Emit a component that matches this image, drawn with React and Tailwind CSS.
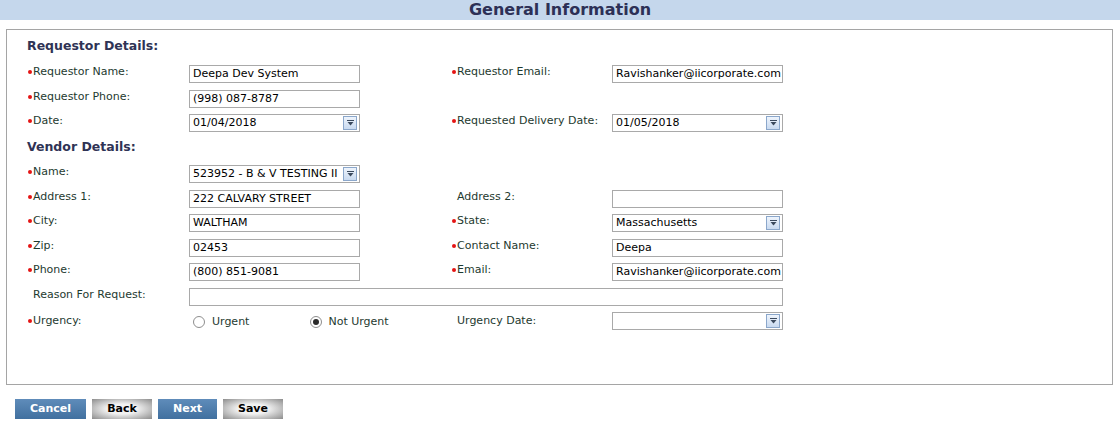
import React from 'react';

const font = { fontFamily: '"DejaVu Sans", Verdana, sans-serif' };

const DropButton = () => (
    <span className="absolute right-[2px] top-[1px] w-[14px] h-[14px] border border-[#8ba7cb] bg-gradient-to-b from-[#eef4fc] to-[#c9daf0] flex items-center justify-center">
        <svg width="7" height="6" viewBox="0 0 7 6">
            <rect x="0" y="0" width="7" height="1" fill="#3b4a5e" />
            <path d="M0.5 2 L6.5 2 L3.5 5.5 Z" fill="#3b4a5e" />
        </svg>
    </span>
);

const Label = ({ text, required = true }) => (
    <div className="flex items-center text-[11px] leading-[14px] text-[#1e3a2f] whitespace-nowrap">
        <span className={`w-[4px] h-[4px] rounded-full mr-[1px] ml-[1px] ${required ? 'bg-[#e41414]' : 'bg-transparent'}`} />
        {text}
    </div>
);

const TextBox = ({ value = '', wide = false }) => (
    <div className={`${wide ? 'w-[594px]' : 'w-[171px]'} h-[18px] border border-[#a9a9a9] bg-white text-[11px] leading-[16px] text-black pl-[3px] overflow-hidden whitespace-nowrap`}>
        {value}
    </div>
);

const SelectBox = ({ value = '' }) => (
    <div className="relative w-[171px] h-[18px] border border-[#a9a9a9] bg-white text-[11px] leading-[16px] text-black pl-[3px] pr-[20px] whitespace-nowrap">
        <div className="overflow-hidden">{value}</div>
        <DropButton />
    </div>
);

const Row = ({ children }) => (
    <div className="grid grid-cols-[162px_171px_91px_161px_171px] h-[24.5px] items-start">
        {children}
    </div>
);

const Radio = ({ checked }) => (
    <span className="w-[12px] h-[12px] rounded-full border border-[#8e8e8e] bg-white flex items-center justify-center">
        {checked && <span className="w-[6px] h-[6px] rounded-full bg-[#2a2a2a]" />}
    </span>
);

const App = () => {
    return (
        <div className="w-[1120px] h-[428px] bg-white" style={font}>
            {/* Header */}
            <div className="h-[20px] bg-[#c5d7ec] text-center text-[16px] leading-[20px] font-bold text-[#2d3056]">
                General Information
            </div>

            {/* Form panel */}
            <div className="ml-[6px] mr-[7px] mt-[9px] h-[356px] border border-[#a5a5a5] pl-[20px] pt-[8px]">
                <div className="h-[27px] text-[12.5px] leading-[16px] font-bold text-[#2f3355]">Requestor Details:</div>
                <Row>
                    <Label text="Requestor Name:" />
                    <TextBox value="Deepa Dev System" />
                    <div />
                    <Label text="Requestor Email:" />
                    <TextBox value="Ravishanker@iicorporate.com" />
                </Row>
                <Row>
                    <Label text="Requestor Phone:" />
                    <TextBox value="(998) 087-8787" />
                </Row>
                <Row>
                    <Label text="Date:" />
                    <SelectBox value="01/04/2018" />
                    <div />
                    <Label text="Requested Delivery Date:" />
                    <SelectBox value="01/05/2018" />
                </Row>
                <div className="h-[26.5px] text-[12.5px] leading-[16px] font-bold text-[#2f3355]">Vendor Details:</div>
                <Row>
                    <Label text="Name:" />
                    <SelectBox value="523952 - B & V TESTING II" />
                </Row>
                <Row>
                    <Label text="Address 1:" />
                    <TextBox value="222 CALVARY STREET" />
                    <div />
                    <Label text="Address 2:" required={false} />
                    <TextBox />
                </Row>
                <Row>
                    <Label text="City:" />
                    <TextBox value="WALTHAM" />
                    <div />
                    <Label text="State:" />
                    <SelectBox value="Massachusetts" />
                </Row>
                <Row>
                    <Label text="Zip:" />
                    <TextBox value="02453" />
                    <div />
                    <Label text="Contact Name:" />
                    <TextBox value="Deepa" />
                </Row>
                <Row>
                    <Label text="Phone:" />
                    <TextBox value="(800) 851-9081" />
                    <div />
                    <Label text="Email:" />
                    <TextBox value="Ravishanker@iicorporate.com" />
                </Row>
                <Row>
                    <Label text="Reason For Request:" required={false} />
                    <div className="col-span-4">
                        <TextBox wide />
                    </div>
                </Row>
                <Row>
                    <div className="pt-[2px]">
                        <Label text="Urgency:" />
                    </div>
                    <div className="col-span-2 flex items-center h-[18px] mt-[1px] pl-[4px] text-[11px] text-[#1e3a2f]">
                        <Radio checked={false} />
                        <span className="ml-[7px]">Urgent</span>
                        <span className="ml-[61px]"><Radio checked /></span>
                        <span className="ml-[6px]">Not Urgent</span>
                    </div>
                    <div className="pt-[2px]">
                        <Label text="Urgency Date:" required={false} />
                    </div>
                    <SelectBox />
                </Row>
            </div>

            {/* Buttons */}
            <div className="flex gap-[6px] pl-[15px] mt-[14px] text-[11px] font-bold">
                <button className="w-[71px] h-[20px] bg-gradient-to-b from-[#5f8cba] to-[#41709f] text-white">Cancel</button>
                <button className="w-[60px] h-[20px] bg-[radial-gradient(ellipse_at_center,#f2f2f2_35%,#8c8c8c_100%)] text-black">Back</button>
                <button className="w-[59px] h-[20px] bg-gradient-to-b from-[#5f8cba] to-[#41709f] text-white">Next</button>
                <button className="w-[60px] h-[20px] bg-[radial-gradient(ellipse_at_center,#f2f2f2_35%,#8c8c8c_100%)] text-black">Save</button>
            </div>
        </div>
    );
};

export default App;
